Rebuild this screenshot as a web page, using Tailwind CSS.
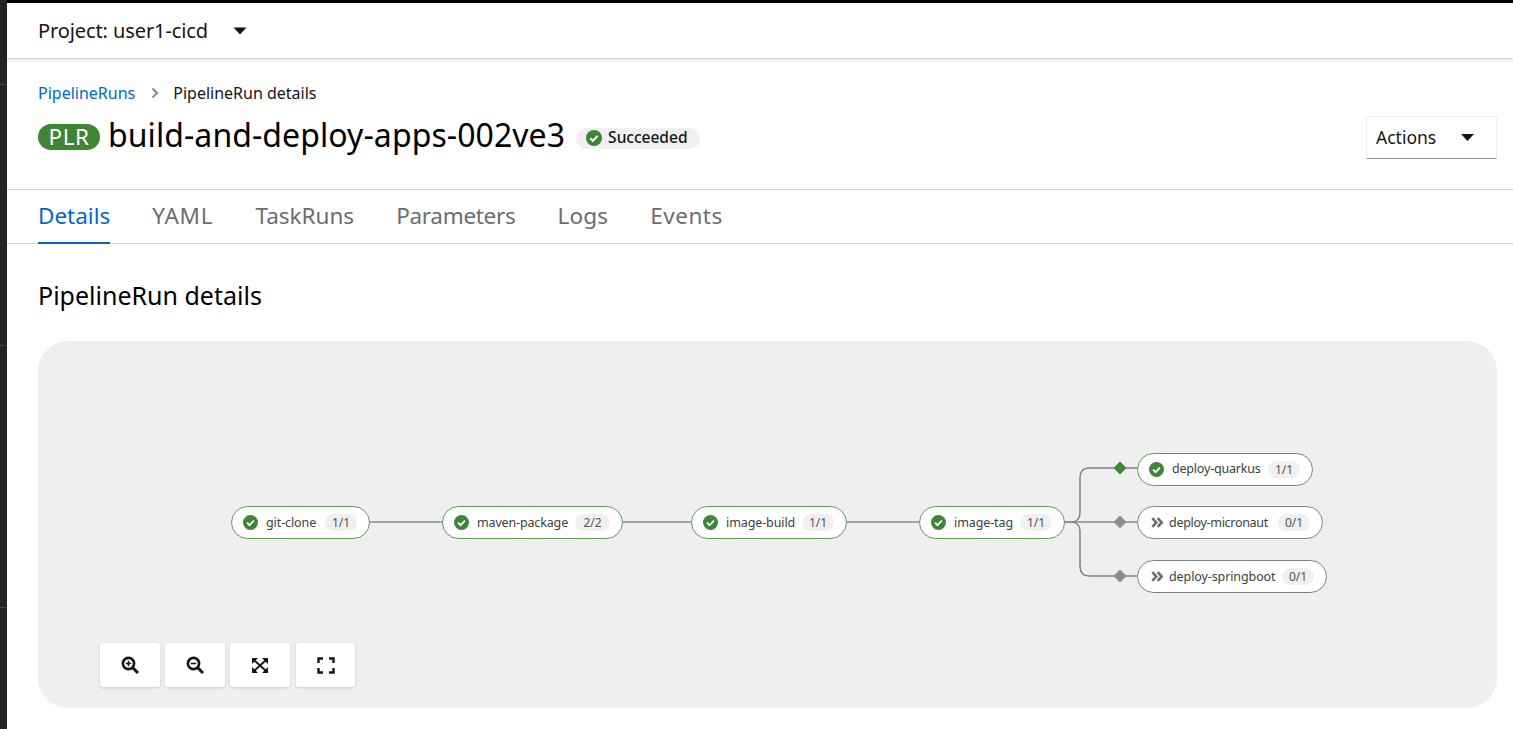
<!DOCTYPE html>
<html lang="en">
<head>
<meta charset="utf-8">
<script src="https://cdn.jsdelivr.net/npm/@tailwindcss/browser@4"></script>
<title>PipelineRun details</title>
</head>
<body class="h-[729px] w-[1513px] overflow-hidden bg-white font-['Noto_Sans',sans-serif] text-[#151515]">
<div class="flex h-[729px]">
  <!-- left rail -->
  <aside class="flex w-[7px] shrink-0 flex-col bg-[#212427]">
    <div class="h-[85px] border-b border-[#3c3f42]"></div>
    <div class="h-[261px] border-b border-[#3c3f42]"></div>
    <div class="h-[262px] border-b border-[#3c3f42]"></div>
  </aside>
  <main class="flex min-w-0 flex-1 flex-col">
    <div class="h-[3px] bg-black"></div>
    <!-- project bar -->
    <header class="relative z-10 flex h-[55px] items-center pl-[31px] shadow-[0_1px_3px_rgba(3,3,3,0.25)]">
      <span class="text-[20px] leading-none tracking-[-0.1px]">Project: user1-cicd</span>
      <svg class="ml-[25px]" width="14" height="8" viewBox="0 0 14 8"><path d="M0.5 0.5h13L7 7.5z" fill="#151515"/></svg>
    </header>
    <!-- breadcrumb -->
    <nav class="mt-[23px] flex h-[24px] items-center pl-[31px] text-[16px]">
      <a class="text-[#0066cc]">PipelineRuns</a>
      <svg class="ml-[16px] mr-[14px]" width="8" height="12" viewBox="0 0 8 12"><path d="M1.500 1.500L6 6l-4.500 4.500" fill="none" stroke="#8a8d90" stroke-width="2.200"/></svg>
      <span>PipelineRun details</span>
    </nav>
    <!-- title -->
    <div class="flex h-[73px] items-start pl-[31px] pr-[16px]">
      <div class="flex items-center pt-[15px]">
        <span class="flex h-[26px] w-[62px] items-center justify-center rounded-full bg-[#3e8635] text-[22.500px] leading-none tracking-[0.5px] text-white">PLR</span>
        <h1 class="ml-[8px] mt-[-4px] text-[32px] font-normal leading-[38px] tracking-[0.07px] text-black">build-and-deploy-apps-002ve3</h1>
        <span class="ml-[11px] mt-[2px] flex h-[21px] w-[124px] items-center rounded-full bg-[#f0f0f0] pl-[10px] text-[15.500px] font-medium leading-none">
          <svg width="16" height="16" viewBox="0 0 16 16" class="mr-[6px] shrink-0"><circle cx="8" cy="8" r="8" fill="#3e8635"/><path d="M4.300 8.200l2.600 2.600 4.800-4.900" fill="none" stroke="#fff" stroke-width="2"/></svg>
          Succeeded
        </span>
      </div>
      <button class="ml-auto mt-[11px] flex h-[43px] w-[131px] items-center justify-between border border-[#f0f0f0] border-b-[#8a8d90] pl-[9px] pr-[22px] text-[17.500px] text-[#151515]">
        Actions
        <svg width="13" height="7" viewBox="0 0 13 7"><path d="M0 0h13L6.500 7z" fill="#151515"/></svg>
      </button>
    </div>
    <!-- tabs -->
    <div class="mt-[11px] flex h-[55px] items-stretch gap-[42px] border-y border-[#d2d2d2] pb-[2px] pl-[31px] text-[22.500px] text-[#6a6e73]">
      <a class="relative flex items-center text-[#0066cc] after:absolute after:inset-x-0 after:bottom-[-3px] after:h-[2px] after:bg-[#0066cc]">Details</a>
      <a class="flex items-center tracking-[0.8px]">YAML</a>
      <a class="flex items-center">TaskRuns</a>
      <a class="flex items-center tracking-[-0.3px]">Parameters</a>
      <a class="flex items-center tracking-[0.2px]">Logs</a>
      <a class="flex items-center tracking-[0.5px]">Events</a>
    </div>
    <div class="pl-[31px] pr-[16px]">
      <h2 class="mt-[33px] text-[25px] font-normal leading-[36px] text-black">PipelineRun details</h2>
      <!-- topology canvas -->
      <section class="relative mt-[28px] h-[367px] w-[1459px] rounded-[30px] bg-[#efefef]">
        <svg class="absolute inset-0" width="1459" height="367" viewBox="38 341 1459 367" fill="none">
          <path d="M369 522H442M622 522H692M846 522H919" stroke="#8a8d90" stroke-width="1.500"/>
          <path d="M1064 522H1072C1077 522 1080 518 1080 513V478C1080 472 1083 468 1089 468H1138" stroke="#808285" stroke-width="1.500"/>
          <path d="M1064 522H1138" stroke="#8a8d90" stroke-width="1.500"/>
          <path d="M1072 522C1077 522 1080 526 1080 531V566C1080 572 1083 576 1089 576H1138" stroke="#808285" stroke-width="1.500"/>
          <path d="M1120 461.500l6.500 6.500-6.500 6.500-6.500-6.500z" fill="#3e8635"/>
          <path d="M1120 515.500l6.500 6.500-6.500 6.500-6.500-6.500z" fill="#8a8d90"/>
          <path d="M1120 569.500l6.500 6.500-6.500 6.500-6.500-6.500z" fill="#8a8d90"/>
        </svg>

        <!-- nodes -->
        <div class="absolute left-[193px] top-[165px] flex h-[33px] w-[139px] items-center rounded-full border-[1.5px] border-[#5f9b57] bg-white pl-[11px] text-[12.500px] text-[#3c3f42]">
          <svg width="15" height="15" viewBox="0 0 16 16"><circle cx="8" cy="8" r="8" fill="#3e8635"/><path d="M4.300 8.200l2.600 2.600 4.800-4.900" fill="none" stroke="#fff" stroke-width="2"/></svg>
          <span class="ml-[8px] mt-[1px] tracking-[-0.1px]">git-clone</span>
          <span class="ml-auto mr-[12px] flex h-[17px] w-[32px] items-center justify-center rounded-full bg-[#f0f0f0] text-[12px] text-[#555]">1/1</span>
        </div>
        <div class="absolute left-[404px] top-[165px] flex h-[33px] w-[181px] items-center rounded-full border-[1.5px] border-[#5f9b57] bg-white pl-[11px] text-[12.500px] text-[#3c3f42]">
          <svg width="15" height="15" viewBox="0 0 16 16"><circle cx="8" cy="8" r="8" fill="#3e8635"/><path d="M4.300 8.200l2.600 2.600 4.800-4.900" fill="none" stroke="#fff" stroke-width="2"/></svg>
          <span class="ml-[8px] mt-[1px] tracking-[-0.15px]">maven-package</span>
          <span class="ml-auto mr-[12px] flex h-[17px] w-[35px] items-center justify-center rounded-full bg-[#f0f0f0] text-[12px] text-[#555]">2/2</span>
        </div>
        <div class="absolute left-[653px] top-[165px] flex h-[33px] w-[156px] items-center rounded-full border-[1.5px] border-[#5f9b57] bg-white pl-[11px] text-[12.500px] text-[#3c3f42]">
          <svg width="15" height="15" viewBox="0 0 16 16"><circle cx="8" cy="8" r="8" fill="#3e8635"/><path d="M4.300 8.200l2.600 2.600 4.800-4.900" fill="none" stroke="#fff" stroke-width="2"/></svg>
          <span class="ml-[8px] mt-[1px] tracking-[-0.1px]">image-build</span>
          <span class="ml-auto mr-[12px] flex h-[17px] w-[32px] items-center justify-center rounded-full bg-[#f0f0f0] text-[12px] text-[#555]">1/1</span>
        </div>
        <div class="absolute left-[881px] top-[165px] flex h-[33px] w-[146px] items-center rounded-full border-[1.5px] border-[#5f9b57] bg-white pl-[11px] text-[12.500px] text-[#3c3f42]">
          <svg width="15" height="15" viewBox="0 0 16 16"><circle cx="8" cy="8" r="8" fill="#3e8635"/><path d="M4.300 8.200l2.600 2.600 4.800-4.900" fill="none" stroke="#fff" stroke-width="2"/></svg>
          <span class="ml-[8px] mt-[1px] tracking-[-0.1px]">image-tag</span>
          <span class="ml-auto mr-[12px] flex h-[17px] w-[32px] items-center justify-center rounded-full bg-[#f0f0f0] text-[12px] text-[#555]">1/1</span>
        </div>
        <div class="absolute left-[1099px] top-[112px] flex h-[33px] w-[176px] items-center rounded-full border-[1.5px] border-[#5f9b57] bg-white pl-[11px] text-[12.500px] text-[#3c3f42]">
          <svg width="15" height="15" viewBox="0 0 16 16"><circle cx="8" cy="8" r="8" fill="#3e8635"/><path d="M4.300 8.200l2.600 2.600 4.800-4.900" fill="none" stroke="#fff" stroke-width="2"/></svg>
          <span class="ml-[8px] tracking-[-0.2px]">deploy-quarkus</span>
          <span class="ml-auto mr-[12px] flex h-[17px] w-[32px] items-center justify-center rounded-full bg-[#f0f0f0] text-[12px] text-[#555]">1/1</span>
        </div>
        <div class="absolute left-[1099px] top-[165px] flex h-[33px] w-[186px] items-center rounded-full border-[1.5px] border-[#808285] bg-white pl-[13px] text-[12.500px] text-[#3c3f42]">
          <svg width="12" height="11" viewBox="0 0 12 11"><path d="M1.300 1.200L5.300 5.500 1.300 9.800M6.700 1.200L10.700 5.500 6.700 9.800" fill="none" stroke="#6a6e73" stroke-width="2.600"/></svg>
          <span class="ml-[6px] mt-[1px] tracking-[-0.3px]">deploy-micronaut</span>
          <span class="ml-auto mr-[12px] flex h-[17px] w-[32px] items-center justify-center rounded-full bg-[#f0f0f0] text-[12px] text-[#555]">0/1</span>
        </div>
        <div class="absolute left-[1099px] top-[219px] flex h-[33px] w-[190px] items-center rounded-full border-[1.5px] border-[#808285] bg-white pl-[13px] text-[12.500px] text-[#3c3f42]">
          <svg width="12" height="11" viewBox="0 0 12 11"><path d="M1.300 1.200L5.300 5.500 1.300 9.800M6.700 1.200L10.700 5.500 6.700 9.800" fill="none" stroke="#6a6e73" stroke-width="2.600"/></svg>
          <span class="ml-[6px] mt-[1px] tracking-[-0.1px]">deploy-springboot</span>
          <span class="ml-auto mr-[12px] flex h-[17px] w-[32px] items-center justify-center rounded-full bg-[#f0f0f0] text-[12px] text-[#555]">0/1</span>
        </div>

        <!-- controls -->
        <div class="absolute left-[62px] top-[302px] flex">
          <button class="mr-[5px] flex h-[44px] w-[60px] items-center justify-center rounded-[3px] bg-white shadow-[0_1px_3px_rgba(3,3,3,0.15)]">
            <svg width="18" height="18" viewBox="0 0 18 18" fill="none"><circle cx="7.500" cy="7.500" r="5.600" stroke="#151515" stroke-width="2.600"/><path d="M12 12l5 5" stroke="#151515" stroke-width="3"/><path d="M7.500 4.800v5.400M4.800 7.500h5.400" stroke="#151515" stroke-width="1.600"/></svg>
          </button>
          <button class="mr-[5px] flex h-[44px] w-[60px] items-center justify-center rounded-[3px] bg-white shadow-[0_1px_3px_rgba(3,3,3,0.15)]">
            <svg width="18" height="18" viewBox="0 0 18 18" fill="none"><circle cx="7.500" cy="7.500" r="5.600" stroke="#151515" stroke-width="2.600"/><path d="M12 12l5 5" stroke="#151515" stroke-width="3"/><path d="M4.800 7.500h5.400" stroke="#151515" stroke-width="1.600"/></svg>
          </button>
          <button class="mr-[6px] flex h-[44px] w-[60px] items-center justify-center rounded-[3px] bg-white shadow-[0_1px_3px_rgba(3,3,3,0.15)]">
            <svg width="18" height="17" viewBox="0 0 18 17" fill="#151515"><path d="M1 1h6L1 7zM17 1h-6L17 7zM1 16h6L1 10zM17 16h-6L17 10z"/><path d="M3 3l12 11M15 3L3 14" stroke="#151515" stroke-width="2"/></svg>
          </button>
          <button class="flex h-[44px] w-[59px] items-center justify-center rounded-[3px] bg-white shadow-[0_1px_3px_rgba(3,3,3,0.15)]">
            <svg width="18" height="17" viewBox="0 0 18 17" fill="none" stroke="#151515" stroke-width="2.400"><path d="M1.500 6V1.500H6M12 1.500h4.500V6M1.500 11v4.500H6M12 15.500h4.500V11"/></svg>
          </button>
        </div>
      </section>
    </div>
  </main>
</div>
</body>
</html>
